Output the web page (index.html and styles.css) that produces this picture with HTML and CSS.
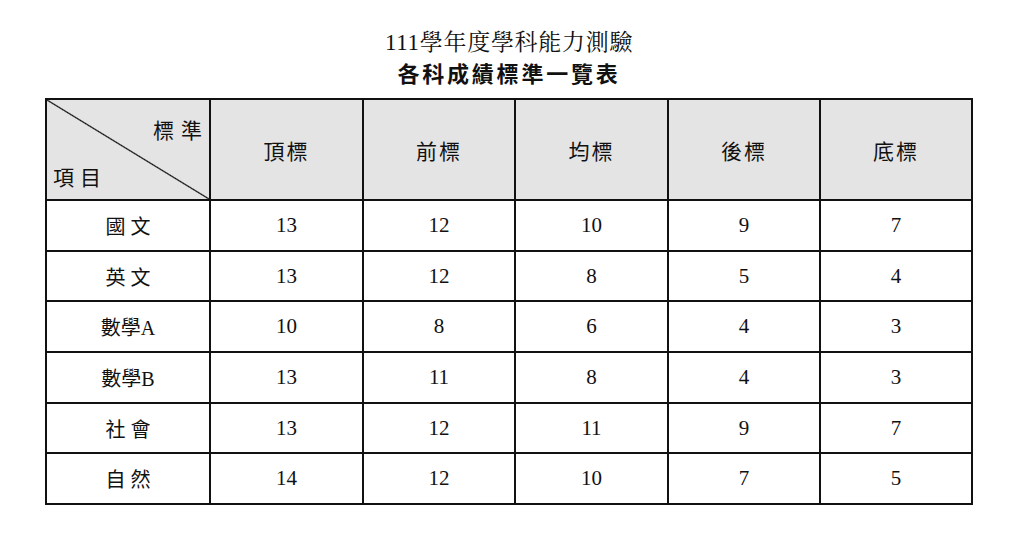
FILE: index.html
```html
<!DOCTYPE html>
<html lang="zh-Hant">
<head>
<meta charset="utf-8">
<link rel="stylesheet" href="styles.css">
</head>
<body>
<div class="page">
  <h1 class="title">111學年度學科能力測驗</h1>
  <h2 class="subtitle">各科成績標準一覽表</h2>
  <table class="grid">
    <colgroup>
      <col class="c0"><col class="c1"><col class="c2"><col class="c3"><col class="c4"><col class="c5">
    </colgroup>
    <thead>
      <tr>
        <th class="corner"><span class="tr">標準</span><span class="bl">項目</span></th>
        <th>頂標</th><th>前標</th><th>均標</th><th>後標</th><th>底標</th>
      </tr>
    </thead>
    <tbody>
      <tr><td class="subj">國 文</td><td>13</td><td>12</td><td>10</td><td>9</td><td>7</td></tr>
      <tr><td class="subj">英 文</td><td>13</td><td>12</td><td>8</td><td>5</td><td>4</td></tr>
      <tr><td class="subj">數學A</td><td>10</td><td>8</td><td>6</td><td>4</td><td>3</td></tr>
      <tr><td class="subj">數學B</td><td>13</td><td>11</td><td>8</td><td>4</td><td>3</td></tr>
      <tr><td class="subj">社 會</td><td>13</td><td>12</td><td>11</td><td>9</td><td>7</td></tr>
      <tr><td class="subj">自 然</td><td>14</td><td>12</td><td>10</td><td>7</td><td>5</td></tr>
    </tbody>
  </table>
</div>
</body>
</html>
```
FILE: styles.css
```css
html, body {
  margin: 0;
  padding: 0;
  background: #fff;
}
body {
  font-family: "Liberation Serif", "Noto Serif CJK TC", "Noto Sans CJK TC", serif;
  color: #111;
}
.page {
  padding-top: 28px;
  padding-left: 45px;
}
.title {
  margin: 0;
  width: 928px;
  text-align: center;
  font-size: 23px;
  font-weight: normal;
  line-height: 30px;
  letter-spacing: 0.7px;
}
.subtitle {
  margin: -1px 0 0 0;
  width: 928px;
  text-align: center;
  font-size: 22px;
  font-weight: bold;
  line-height: 30px;
  letter-spacing: 2.8px;
  font-family: "Noto Sans CJK TC", sans-serif;
}
.grid {
  margin-top: 11px;
  border-collapse: collapse;
  table-layout: fixed;
  width: 928px;
}
.c0 { width: 164px; }
.c1 { width: 153px; }
.c2 { width: 152px; }
.c3 { width: 153px; }
.c4 { width: 152px; }
.c5 { width: 152px; }
.grid th, .grid td {
  border: 2.5px solid #111;
  text-align: center;
  padding: 0;
}
.grid th {
  height: 99px;
  background: #e4e4e4;
  font-weight: normal;
  font-size: 21px;
  font-family: "Noto Sans CJK TC", sans-serif;
  letter-spacing: 2px;
}
.grid td {
  height: 48.7px;
  font-size: 21px;
}
.grid td.subj {
  font-size: 20px;
  font-family: "Liberation Serif", "Noto Sans CJK TC", serif;
}
.grid th.corner {
  position: relative;
  background: linear-gradient(to top right, #e4e4e4 calc(50% - 1.2px), #111 50%, #e4e4e4 calc(50% + 1.2px));
}
.corner .tr {
  position: absolute;
  top: 14px;
  right: 0;
  letter-spacing: 7px;
}
.corner .bl {
  position: absolute;
  bottom: 8px;
  left: 6px;
  letter-spacing: 6px;
}
```
